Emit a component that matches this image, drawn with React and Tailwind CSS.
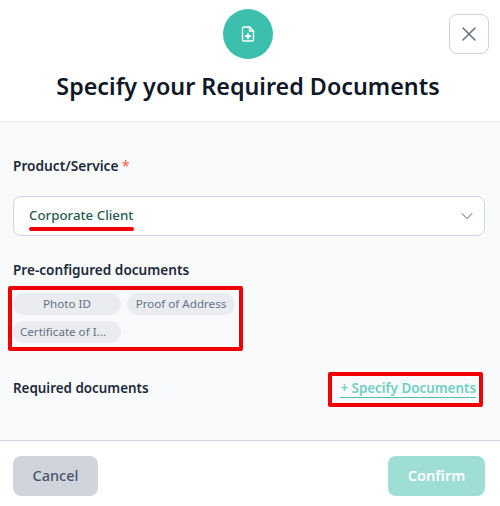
import { X, ChevronDown } from "lucide-react";

const FileIcon = () => (
  <svg width="16" height="16" viewBox="0 0 16 16" fill="none" stroke="white" strokeWidth="1.4" strokeLinecap="round" strokeLinejoin="round">
    <path d="M9.5 1H4a1.5 1.5 0 0 0-1.5 1.5v11A1.5 1.5 0 0 0 4 15h8a1.5 1.5 0 0 0 1.5-1.5V5z" />
    <path d="M9.5 1v4h4" />
    <path d="M8 7.8v4.6M5.7 10.1h4.6" strokeWidth="1.8" />
  </svg>
);

const chips = ["Photo ID", "Proof of Address", "Certificate of I..."];

const App = () => {
  return (
    <div className="w-[500px] h-[506px] bg-white overflow-hidden flex flex-col font-['Noto_Sans',sans-serif]">
      {/* header */}
      <div className="relative h-[122px] shrink-0 border-b border-[#eaecf0] flex flex-col items-center pt-[9px] pr-[4px]">
        <div className="w-[50px] h-[50px] rounded-full bg-[#3dbfae] flex items-center justify-center">
          <FileIcon />
        </div>
        <h2 className="mt-[8px] text-[23.3px] leading-[38px] font-semibold text-[#101828]">
          Specify your Required Documents
        </h2>
        <button className="absolute left-[449px] top-[14px] w-[40px] h-[40px] rounded-lg border border-[#d0d5dd] flex items-center justify-center text-[#667085]">
          <X size={24} strokeWidth={1.5} />
        </button>
      </div>

      {/* body */}
      <div className="relative h-[319px] shrink-0 bg-[#f9fafb] border-b border-[#d0d5dd] pl-[13px] pr-[15px] pt-[34px]">
        <label className="block text-[13.7px] leading-[20px] font-semibold text-[#1d2939]">
          Product/Service <span className="text-[#f97066]">*</span>
        </label>

        <div className="relative mt-[20px] h-[40px] rounded-lg border border-[#d0d5dd] bg-white flex items-center justify-between pl-[15px] pr-[7px]">
          <span className="text-[13.3px] font-medium text-[#2a5a55] pb-[1px]">Corporate Client</span>
          <ChevronDown size={20} strokeWidth={1.3} className="text-[#98a2b3]" />
          <div className="absolute left-[15px] top-[30px] w-[105px] h-[4px] rounded-full bg-[#f00000]" />
        </div>

        <label className="block mt-[24px] text-[13.6px] leading-[20px] font-semibold text-[#1d2939]">
          Pre-configured documents
        </label>

        <div className="relative mt-[13px] grid grid-cols-[108px_108px] gap-x-[6px] gap-y-[6px] w-[224px]">
          {chips.map((chip) => (
            <span
              key={chip}
              className={`h-[22px] rounded-full bg-[#eaecf0] px-[7px] text-[11.6px] leading-[22px] text-[#667085] whitespace-nowrap ${
                chip.endsWith("...") ? "text-left" : "text-center"
              }`}
            >
              {chip}
            </span>
          ))}
          <div className="absolute left-[-5px] top-[-7px] w-[235px] h-[65px] border-[4px] border-[#f00000] rounded-[2px]" />
        </div>

        <div className="relative mt-[35px] flex items-center justify-between">
          <span className="text-[13.4px] leading-[20px] font-semibold text-[#1d2939]">Required documents</span>
          <a className="mr-[9px] pt-[1px] border-b border-[#4cbfb0] text-[13.4px] leading-[18px] font-semibold text-[#70d0c4]">
            + Specify Documents
          </a>
          <div className="absolute left-[315px] top-[-6px] w-[155px] h-[35px] border-[4px] border-[#f00000] rounded-[2px]" />
        </div>
      </div>

      {/* footer */}
      <div className="flex-1 flex items-start justify-between pl-[13px] pt-[15px] pr-[15px]">
        <button className="w-[85px] h-[40px] rounded-lg bg-[#d0d5dd] text-[14.5px] font-medium text-[#475467]">
          Cancel
        </button>
        <button className="w-[97px] h-[40px] rounded-lg bg-[#9fded5] text-[14.6px] font-semibold text-white">
          Confirm
        </button>
      </div>
    </div>
  );
};

export default App;
